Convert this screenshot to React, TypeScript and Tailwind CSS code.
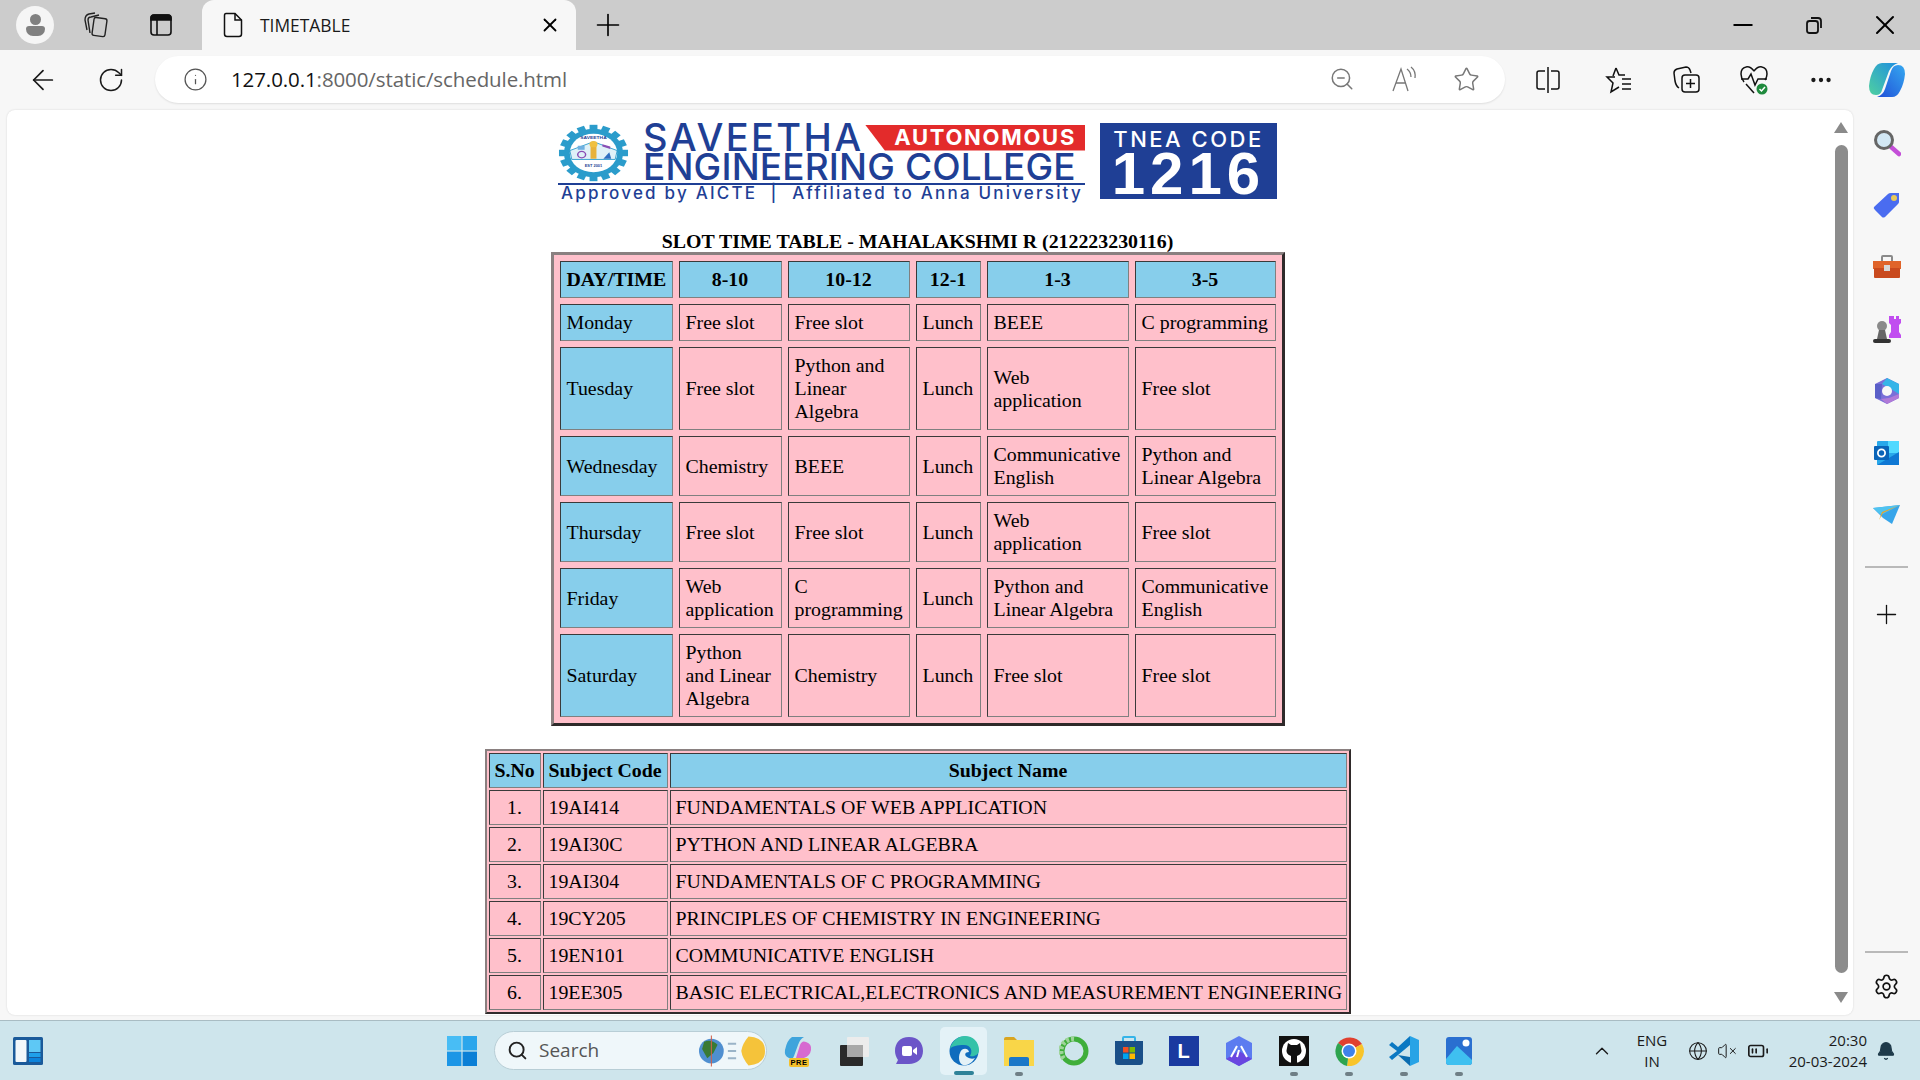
import React from 'react'
import { ArrowLeft, RotateCw, Info, ZoomOut, Star, Plus, X, Minus, MoreHorizontal, Search, ChevronUp, Settings, Bell, Globe, VolumeX, BatteryMedium } from 'lucide-react'

const timetable = [
  ['Monday', 'Free slot', 'Free slot', 'Lunch', 'BEEE', 'C programming'],
  ['Tuesday', 'Free slot', 'Python and Linear Algebra', 'Lunch', 'Web application', 'Free slot'],
  ['Wednesday', 'Chemistry', 'BEEE', 'Lunch', 'Communicative English', 'Python and Linear Algebra'],
  ['Thursday', 'Free slot', 'Free slot', 'Lunch', 'Web application', 'Free slot'],
  ['Friday', 'Web application', 'C programming', 'Lunch', 'Python and Linear Algebra', 'Communicative English'],
  ['Saturday', 'Python and Linear Algebra', 'Chemistry', 'Lunch', 'Free slot', 'Free slot'],
]

const subjects = [
  ['1.', '19AI414', 'FUNDAMENTALS OF WEB APPLICATION'],
  ['2.', '19AI30C', 'PYTHON AND LINEAR ALGEBRA'],
  ['3.', '19AI304', 'FUNDAMENTALS OF C PROGRAMMING'],
  ['4.', '19CY205', 'PRINCIPLES OF CHEMISTRY IN ENGINEERING'],
  ['5.', '19EN101', 'COMMUNICATIVE ENGLISH'],
  ['6.', '19EE305', 'BASIC ELECTRICAL,ELECTRONICS AND MEASUREMENT ENGINEERING'],
]

const cellBorder = 'border border-t-[#3a3a3a] border-l-[#3a3a3a] border-b-[#808080] border-r-[#808080]'
const tableBorder = 'border-t-[#8a8080] border-l-[#8a8080] border-b-[#2f2a2a] border-r-[#2f2a2a]'

const Emblem = () => (
  <svg viewBox="0 0 72 72" preserveAspectRatio="none" className="mt-[1px] h-[58px] w-[71px] shrink-0">
    {[0, 22.5, 45, 67.5, 90, 112.5, 135, 157.5].map((a) => (
      <rect key={a} x="32" y="1" width="8" height="70" fill="#2b9ccb" transform={`rotate(${a} 36 36)`} />
    ))}
    <circle cx="36" cy="36" r="30" fill="#2b9ccb" />
    <circle cx="36" cy="36" r="24" fill="#fff" />
    <path d="M12 33 L36 22 L60 33 L58 44 L14 44 Z" fill="#dff1f8" stroke="#2b9ccb" />
    <path d="M33 26 h6 v17 h-6 z" fill="#e8b23a" />
    <circle cx="36" cy="25" r="4" fill="#f0c040" />
    <circle cx="24" cy="38" r="4" fill="none" stroke="#8a4fb5" strokeWidth="1.5" />
    <path d="M46 43 l6 -8 l2 8 z" fill="#2f6fc0" />
    <rect x="20" y="27" width="7" height="5" fill="#6fb0e0" />
    <path d="M45 25 l8 3 v3 l-8 -3 z" fill="#8a4fb5" />
    <text x="36" y="19" textAnchor="middle" fontSize="5" fill="#1f3f95" fontWeight="700" fontFamily="Liberation Sans">SAVEETHA</text>
    <text x="36" y="53" textAnchor="middle" fontSize="4" fill="#1f3f95" fontWeight="700" fontFamily="Liberation Sans">EST 2001</text>
  </svg>
)

const Logo = () => (
  <div className="flex h-[77px] items-start gap-[15px] font-['Inter'] text-[#1f3f95]">
    <div className="flex w-[527px] flex-col">
      <div className="flex h-[60px] items-start gap-[14px]">
        <Emblem />
        <div className="flex w-[442px] flex-col">
          <div className="flex h-[29px] items-center">
            <span className="w-[222px] text-[38px] font-medium leading-[29px] tracking-[2.4px]">SAVEETHA</span>
            <div className="flex h-[26px] flex-1 items-center justify-end overflow-hidden bg-[#e32b2b] pr-[9px] text-[22px] font-bold tracking-[1.7px] text-white [clip-path:polygon(0_0,100%_0,100%_100%,9%_100%)]">AUTONOMOUS</div>
          </div>
          <div className="whitespace-nowrap text-[37px] font-medium leading-[29px] tracking-[0.15px]">ENGINEERING COLLEGE</div>
        </div>
      </div>
      <div className="h-[2px] bg-[#1f3f95]" />
      <div className="mt-[1px] whitespace-nowrap pl-[3px] text-[17px] font-medium leading-[15px] tracking-[2.2px]">Approved by AICTE&nbsp; | &nbsp;Affiliated to Anna University</div>
    </div>
    <div className="flex h-[76px] w-[177px] flex-col items-center bg-[#1f3f95] text-white">
      <span className="mt-[5px] text-[22px] font-medium leading-[22px] tracking-[2.5px]">TNEA CODE</span>
      <span className="mt-[2px] font-['Liberation_Sans'] text-[60px] font-bold leading-[44px] tracking-[5px]">1216</span>
    </div>
  </div>
)

const TimeTable = () => (
  <table className={`w-[734px] table-fixed border-separate border-spacing-[6px] border-[3px] bg-[#ffc0cb] ${tableBorder}`}>
    <colgroup>
      <col className="w-[113px]" />
      <col className="w-[103px]" />
      <col className="w-[122px]" />
      <col className="w-[65px]" />
      <col className="w-[142px]" />
      <col className="w-[141px]" />
    </colgroup>
    <thead>
      <tr>
        {['DAY/TIME', '8-10', '10-12', '12-1', '1-3', '3-5'].map((h) => (
          <th key={h} className={`bg-[#87ceeb] px-[6px] py-[6px] text-center font-bold ${cellBorder}`}>{h}</th>
        ))}
      </tr>
    </thead>
    <tbody>
      {timetable.map((row) => (
        <tr key={row[0]}>
          {row.map((c, i) => (
            <td key={i} className={`px-[6px] py-[6px] text-left ${i === 0 ? 'bg-[#87ceeb]' : ''} ${cellBorder}`}>{c}</td>
          ))}
        </tr>
      ))}
    </tbody>
  </table>
)

const SubjectTable = () => (
  <table className={`mt-[23px] w-[866px] table-fixed border-separate border-spacing-[2px] border-[2px] bg-[#ffc0cb] ${tableBorder}`}>
    <colgroup>
      <col className="w-[52px]" />
      <col className="w-[125px]" />
      <col />
    </colgroup>
    <thead>
      <tr>
        {['S.No', 'Subject Code', 'Subject Name'].map((h) => (
          <th key={h} className={`whitespace-nowrap bg-[#87ceeb] px-[5px] py-[5px] text-center font-bold ${cellBorder}`}>{h}</th>
        ))}
      </tr>
    </thead>
    <tbody>
      {subjects.map((row) => (
        <tr key={row[0]}>
          <td className={`px-[5px] py-[5px] text-center ${cellBorder}`}>{row[0]}</td>
          <td className={`px-[5px] py-[5px] ${cellBorder}`}>{row[1]}</td>
          <td className={`whitespace-nowrap px-[5px] py-[5px] ${cellBorder}`}>{row[2]}</td>
        </tr>
      ))}
    </tbody>
  </table>
)

const TitleBar = () => (
  <div className="flex h-[50px] shrink-0 items-center bg-[#cccccc] text-black">
    <div className="ml-[16px] flex h-[38px] w-[38px] flex-col items-center justify-center rounded-full bg-[#f5f5f5]">
      <div className="h-[11px] w-[11px] rounded-full bg-[#808080]" />
      <div className="mt-[1px] h-[10px] w-[19px] rounded-b-[9px] rounded-t-[4px] bg-[#808080]" />
    </div>
    <svg viewBox="0 0 28 28" className="ml-[28px] h-[28px] w-[28px]" fill="none" stroke="#222" strokeWidth="1.4">
      <rect x="11" y="7" width="13" height="18" rx="2" transform="rotate(8 17 16)" />
      <path d="M8 22 L6 9 Q6 6 9 6 L17 4" />
      <path d="M5 19 L3 9 Q3 4 7 3 L13 2" />
    </svg>
    <svg viewBox="0 0 24 24" className="ml-[39px] h-[24px] w-[24px]" fill="none" stroke="#111" strokeWidth="1.6">
      <rect x="2" y="2" width="20" height="20" rx="3" />
      <path d="M2 5 Q2 2 5 2 H19 Q22 2 22 5 V7 H2 Z" fill="#111" />
      <path d="M8 7 V22" />
    </svg>
    <div className="ml-[29px] flex h-[50px] w-[374px] items-center self-end rounded-t-[12px] bg-[#f7f7f7] pl-[21px] pr-[15px] font-['Open_Sans']">
      <svg viewBox="0 0 20 26" className="h-[26px] w-[20px]" fill="none" stroke="#111" strokeWidth="1.5">
        <path d="M3 1.5 H12 L18.5 8 V22 Q18.5 24.5 16 24.5 H4 Q1.5 24.5 1.5 22 V3.5 Q1.5 1.5 3 1.5 Z" />
        <path d="M12 1.5 V8 H18.5" />
      </svg>
      <span className="ml-[17px] flex-1 text-[17.4px] text-[#1a1a1a]">TIMETABLE</span>
      <X className="h-[22px] w-[22px]" strokeWidth={2} />
    </div>
    <Plus className="ml-[14px] h-[36px] w-[36px]" strokeWidth={1.1} />
    <div className="flex-1" />
    <Minus className="h-[30px] w-[30px]" strokeWidth={1.6} />
    <svg viewBox="0 0 20 20" className="ml-[46px] h-[20px] w-[20px]" fill="none" stroke="#111" strokeWidth="1.8">
      <rect x="3" y="6" width="11" height="12" rx="2.5" />
      <path d="M7 3 H14 Q17 3 17 6 V13" />
    </svg>
    <X className="ml-[45px] mr-[19px] h-[32px] w-[32px]" strokeWidth={1.5} />
  </div>
)

const ToolBar = () => (
  <div className="flex h-[60px] shrink-0 items-center bg-[#f7f7f7] text-[#1a1a1a]">
    <ArrowLeft className="ml-[27px] h-[32px] w-[32px]" strokeWidth={1.3} />
    <RotateCw className="ml-[38px] h-[28px] w-[28px]" strokeWidth={1.3} />
    <div className="mb-[2px] ml-[30px] flex h-[47px] w-[1350px] items-center rounded-full bg-white shadow-[0_1px_2px_rgba(0,0,0,0.1)]">
      <Info className="ml-[28px] h-[25px] w-[25px] text-[#555]" strokeWidth={1.2} />
      <span className="ml-[23px] flex-1 font-['Open_Sans'] text-[20.5px] tracking-[-0.1px]">
        <span className="text-[#111]">127.0.0.1</span><span className="text-[#666]">:8000/static/schedule.html</span>
      </span>
      <ZoomOut className="h-[26px] w-[26px] text-[#777]" strokeWidth={1.4} />
      <svg viewBox="0 0 28 26" className="ml-[36px] h-[26px] w-[28px]" fill="none" stroke="#777" strokeWidth="1.3">
        <path d="M2 25 L10 3 L17 25 M5 17 H15" />
        <path d="M16 3 Q20 6 20 11 M20 1 Q25 5 24 12" />
      </svg>
      <Star className="ml-[34px] mr-[25px] h-[27px] w-[27px] text-[#777]" strokeWidth={1.3} />
    </div>
    <svg viewBox="0 0 26 26" className="ml-[30px] h-[26px] w-[26px]" fill="none" stroke="#111" strokeWidth="1.5">
      <path d="M13 0 V26" />
      <path d="M10 4 H4 Q2 4 2 6 V20 Q2 22 4 22 H10" />
      <path d="M16 4 H22 Q24 4 24 6 V20 Q24 22 22 22 H16" />
    </svg>
    <svg viewBox="0 0 28 28" className="ml-[44px] h-[28px] w-[28px]" fill="none" stroke="#111" strokeWidth="1.5">
      <path d="M11 2 L14 9 L20 9 M10 11 L2 11 L8 17 L6 26 L14 21" />
      <path d="M11 2 L8 10" />
      <path d="M17 13 H26 M17 18 H26 M17 23 H26" />
    </svg>
    <svg viewBox="0 0 28 28" className="ml-[40px] h-[28px] w-[28px]" fill="none" stroke="#111" strokeWidth="1.5">
      <path d="M6 22 Q3 20 2 15 L1 7 Q1 4 4 3 L13 1 Q16 1 17 4 L18 7" />
      <rect x="9" y="9" width="17" height="17" rx="3" />
      <path d="M17.5 13 V22 M13 17.5 H22" />
    </svg>
    <svg viewBox="0 0 28 30" className="ml-[39px] h-[30px] w-[28px]" fill="none" stroke="#111" strokeWidth="1.5">
      <path d="M14 6 Q10 1 6 2 Q1 3 1 9 Q1 13 4 17 M14 6 Q18 1 22 2 Q27 3 27 9 Q27 12 25 15" />
      <path d="M1 14 H8 L11 9 L15 20 L18 14 H27" />
      <path d="M6 19 L14 28" />
      <circle cx="22" cy="24" r="5.5" fill="#1f8a3d" stroke="none" />
      <path d="M19.5 24 L21.5 26 L25 22" stroke="#fff" />
    </svg>
    <MoreHorizontal className="ml-[40px] h-[26px] w-[26px]" strokeWidth={2} />
    <svg viewBox="0 0 38 36" className="ml-[34px] h-[36px] w-[38px]">
      <defs>
        <linearGradient id="copA" x1="0" y1="1" x2="1" y2="0">
          <stop offset="0" stopColor="#4fd0a0" />
          <stop offset="1" stopColor="#1f8fe0" />
        </linearGradient>
        <linearGradient id="copB" x1="0" y1="1" x2="1" y2="0">
          <stop offset="0" stopColor="#2050d8" />
          <stop offset="1" stopColor="#35a8f0" />
        </linearGradient>
      </defs>
      <path d="M14 1 H30 Q24 3 21 9 L14 28 Q13 33 8 33 Q1 33 1 24 Q2 14 6 7 Q9 1 14 1 Z" fill="url(#copA)" />
      <path d="M24 35 H9 Q15 33 17 27 L23 9 Q25 3 30 3 Q37 3 37 12 Q36 22 32 29 Q29 35 24 35 Z" fill="url(#copB)" />
    </svg>
  </div>
)

const ScrollBar = () => (
  <div className="flex w-[25px] shrink-0 flex-col items-center pl-[1px]">
    <div className="mt-[12px] h-0 w-0 border-x-[7.5px] border-b-[11px] border-x-transparent border-b-[#8a8a8a]" />
    <div className="mt-[12px] h-[828px] w-[13px] rounded-full bg-[#8c8c8c]" />
    <div className="mt-[19px] h-0 w-0 border-x-[7.5px] border-t-[11px] border-x-transparent border-t-[#8a8a8a]" />
  </div>
)

const SideSlot = ({ children }: { children: React.ReactNode }) => (
  <div className="flex h-[62px] w-full items-center justify-center">{children}</div>
)

const SideBar = () => (
  <div className="flex w-[67px] shrink-0 flex-col items-center pt-[2px]">
    <SideSlot>
      <svg viewBox="0 0 28 28" className="h-[28px] w-[28px]">
        <path d="M17 17 L26 25" stroke="#c44fd8" strokeWidth="4.5" strokeLinecap="round" />
        <circle cx="11" cy="11" r="8.5" fill="#d3e8f5" stroke="#666" strokeWidth="3" />
      </svg>
    </SideSlot>
    <SideSlot>
      <svg viewBox="0 0 28 28" className="h-[28px] w-[28px]">
        <path d="M1 16 L15 3 Q16 2 18 2 H26 V11 Q26 12 25 13 L12 26 Q10 27 9 26 L2 19 Q0 17 1 16 Z" fill="#4a6cf0" />
        <circle cx="21" cy="7" r="3" fill="#e8c95a" />
      </svg>
    </SideSlot>
    <SideSlot>
      <svg viewBox="0 0 30 24" className="h-[24px] w-[30px]">
        <path d="M10 6 V2 Q10 1 11 1 H19 Q20 1 20 2 V6" fill="none" stroke="#8a8a8a" strokeWidth="2" />
        <rect x="1" y="6" width="28" height="8" fill="#e0642a" />
        <rect x="2" y="13" width="26" height="10" rx="1" fill="#c94a1e" />
        <rect x="12" y="10" width="6" height="6" fill="#d8d8d8" />
      </svg>
    </SideSlot>
    <SideSlot>
      <svg viewBox="0 0 30 30" className="h-[30px] w-[30px]">
        <path d="M19 2 H22 V5 H24 V2 H27 V5 H29 V2 V9 L27 11 V18 L29 21 V24 H17 V21 L19 18 V11 L17 9 V2 Z" fill="#c14df0" />
        <circle cx="10" cy="12" r="5" fill="#8a8a8a" />
        <path d="M7 16 H13 L15 25 H5 Z" fill="#666" />
        <rect x="1" y="25" width="18" height="4" rx="2" fill="#333" />
      </svg>
    </SideSlot>
    <SideSlot>
      <svg viewBox="0 0 26 28" className="h-[28px] w-[26px]">
        <path d="M13 1 L25 7 V21 L13 27 L1 21 V7 Z" fill="#7a6fd8" />
        <path d="M13 1 L25 7 V17 L17 12 L8 7 Z" fill="#35b4e8" />
        <path d="M25 17 V21 L13 27 L7 22 L15 21 Z" fill="#b07ad8" />
        <path d="M1 7 L8 7 L7 22 L1 21 Z" fill="#5a5fc8" />
        <circle cx="13" cy="14" r="5" fill="#f7f7f7" />
      </svg>
    </SideSlot>
    <SideSlot>
      <svg viewBox="0 0 26 26" className="h-[26px] w-[26px]">
        <rect x="3" y="1" width="22" height="24" rx="1" fill="#28a8ea" />
        <rect x="14" y="1" width="11" height="12" fill="#50d9ff" />
        <path d="M3 25 L25 12 V25 Z" fill="#0f78d4" />
        <rect x="0" y="6" width="15" height="14" rx="1" fill="#0a64b8" />
        <circle cx="7.5" cy="13" r="3.6" fill="none" stroke="#fff" strokeWidth="1.8" />
      </svg>
    </SideSlot>
    <SideSlot>
      <svg viewBox="0 0 28 20" className="h-[20px] w-[28px]">
        <path d="M0 3 L27 0 L19 19 L10 13 Z" fill="#37a5ea" />
        <path d="M0 3 L27 0 L8 10 Z" fill="#4fc3f0" />
        <path d="M27 0 L9 7 L6 15 L10 8 Z" fill="#e8a42a" />
      </svg>
    </SideSlot>
    <div className="mt-[20px] h-[2px] w-[43px] bg-[#b9b9b9]" />
    <Plus className="mt-[31px] h-[31px] w-[31px] text-[#111]" strokeWidth={1} />
    <div className="flex-1" />
    <div className="h-[2px] w-[43px] bg-[#b9b9b9]" />
    <Settings className="mb-[20px] mt-[20px] h-[27px] w-[27px] text-[#111]" strokeWidth={1.5} />
  </div>
)

const TaskSlot = ({ children, dot, active }: { children: React.ReactNode; dot?: boolean; active?: boolean }) => (
  <div className="relative flex h-[48px] w-[55px] items-center justify-center">
    {active && <div className="absolute inset-y-0 left-[4px] right-[4px] rounded-[5px] bg-[#e4f2f7]" />}
    <div className="relative">{children}</div>
    {dot && <div className="absolute bottom-[-1px] h-[4px] w-[8px] rounded-full bg-[#6f7f86]" />}
    {active && <div className="absolute bottom-[0px] h-[4px] w-[20px] rounded-full bg-[#2f8298]" />}
  </div>
)

const TaskBar = () => (
  <div className="flex h-[60px] shrink-0 items-center border-t border-t-[#a9bcc3] bg-[#cee5ec] font-['Open_Sans'] text-[#1a1a1a]">
    <svg viewBox="0 0 30 28" className="ml-[13px] h-[28px] w-[30px]">
      <rect width="30" height="28" rx="1.5" fill="#1a5a9a" />
      <rect x="2.5" y="3" width="11" height="22" rx="1" fill="#f2f7fa" />
      <rect x="16" y="3" width="11.5" height="12" fill="#5ec8f5" />
      <rect x="16" y="16" width="11.5" height="4" fill="#1fa0ea" />
      <rect x="16" y="21" width="11.5" height="4" fill="#0c84dc" />
    </svg>
    <svg viewBox="0 0 30 30" className="ml-[404px] h-[30px] w-[30px]">
      <rect width="14.4" height="14.4" fill="#48bdf5" />
      <rect x="15.6" width="14.4" height="14.4" fill="#2ba6ec" />
      <rect y="15.6" width="14.4" height="14.4" fill="#1c96e6" />
      <rect x="15.6" y="15.6" width="14.4" height="14.4" fill="#0b7fd6" />
    </svg>
    <div className="ml-[17px] flex h-[39px] w-[273px] items-center rounded-full border border-[#b8ced6] bg-[#eff7fa] pl-[12px]">
      <Search className="h-[21px] w-[21px] text-[#222]" strokeWidth={2.2} />
      <span className="ml-[11px] flex-1 text-[19px] text-[#555]">Search</span>
      <svg viewBox="0 0 64 30" className="mr-[1px] h-[32px] w-[66px]">
        <circle cx="12" cy="15" r="12" fill="#4f8fd0" />
        <path d="M5 6 Q12 3 18 9 L14 17 L8 22 L3 13 Z" fill="#3a7a35" />
        <path d="M12 0 V30" stroke="#d0604a" strokeWidth="1" />
        <path d="M28 8 H36 M28 15 H36 M28 22 H36" stroke="#9ab4c8" strokeWidth="2" />
        <path d="M64 15 Q64 28 48 29 Q42 22 41 15 Q42 8 48 1 Q64 2 64 15 Z" fill="#f5c33a" />
      </svg>
    </div>
    <div className="ml-[4px] flex items-center">
      <TaskSlot>
        <div className="relative h-[30px] w-[30px]">
          <svg viewBox="0 0 30 30" className="h-[30px] w-[30px]">
            <path d="M8 1 H20 Q16 3 14 9 L10 20 Q9 24 5 22 Q0 20 1 14 Q3 4 8 1 Z" fill="#3fa4dc" />
            <path d="M20 22 H12 L16 9 Q18 4 22 6 Q28 8 27 14 Q26 20 20 22 Z" fill="#d76ad0" />
          </svg>
          <span className="absolute bottom-[-1px] left-[5px] rounded-[2px] bg-[#f5c02a] px-[2px] font-['Liberation_Sans'] text-[7.5px] font-bold leading-[9px] tracking-[0.5px] text-black">PRE</span>
        </div>
      </TaskSlot>
      <TaskSlot>
        <svg viewBox="0 0 30 30" className="h-[30px] w-[30px]">
          <rect x="1" y="9" width="23" height="21" rx="1" fill="#2a2a2a" />
          <rect x="8" y="1" width="22" height="20" rx="1" fill="#ececec" />
          <rect x="8" y="9" width="16" height="12" fill="#a8a8a8" />
        </svg>
      </TaskSlot>
      <TaskSlot>
        <svg viewBox="0 0 30 30" className="h-[30px] w-[30px]">
          <path d="M15 1 C24 1 29 7 29 15 C29 23 23 28 15 28 H2 L4 24 C2 21 1 18 1 15 C1 7 6 1 15 1 Z" fill="#6b55c8" />
          <rect x="8" y="10" width="10" height="10" rx="2" fill="#fff" />
          <path d="M19 14 L23 11 V19 L19 16 Z" fill="#fff" />
        </svg>
      </TaskSlot>
      <TaskSlot active>
        <svg viewBox="0 0 30 30" className="h-[30px] w-[30px]">
          <circle cx="15" cy="15" r="14.5" fill="#0f6cbd" />
          <path d="M1 13 C3 4 10 0 16 0 C24 0 30 6 30 14 C30 19 25 21 21 20 C24 15 22 9 15 9 C8 9 3 10 1 13 Z" fill="#35c2a8" />
          <path d="M11 17 C12 12 19 11 20 16 C16 16 15 19 18 21 C21 23 24 23 26 22 C23 27 18 30 14 29 C10 28 9 21 11 17 Z" fill="#e4f2f7" />
        </svg>
      </TaskSlot>
      <TaskSlot dot>
        <svg viewBox="0 0 30 30" className="h-[30px] w-[30px]">
          <path d="M0 3 Q0 1 2 1 H10 L13 4 H0 Z" fill="#d9a520" />
          <rect y="4" width="30" height="26" fill="#f9d648" />
          <rect x="5" y="22" width="20" height="8" fill="#f5b82a" />
          <path d="M5 30 V23 Q5 21 7 21 H23 Q25 21 25 23 V30 Z" fill="#1b78c8" />
        </svg>
      </TaskSlot>
      <TaskSlot>
        <svg viewBox="0 0 30 30" className="h-[30px] w-[30px]">
          <circle cx="15" cy="15" r="12" fill="none" stroke="#3fae3a" strokeWidth="5" />
          <path d="M15 3 A12 12 0 0 0 6 24" fill="none" stroke="#9fd49a" strokeWidth="5" strokeDasharray="3 2" />
        </svg>
      </TaskSlot>
      <TaskSlot>
        <svg viewBox="0 0 30 30" className="h-[30px] w-[30px]">
          <path d="M9 5 V2 Q9 1 10 1 H20 Q21 1 21 2 V5" fill="none" stroke="#35b4e8" strokeWidth="2" />
          <path d="M1 5 H29 V26 Q29 29 26 29 H4 Q1 29 1 26 Z" fill="#1a4f88" />
          <rect x="9" y="11" width="5.5" height="5.5" fill="#f25022" />
          <rect x="15.5" y="11" width="5.5" height="5.5" fill="#7fba00" />
          <rect x="9" y="17.5" width="5.5" height="5.5" fill="#00a4ef" />
          <rect x="15.5" y="17.5" width="5.5" height="5.5" fill="#ffb900" />
        </svg>
      </TaskSlot>
      <TaskSlot>
        <div className="flex h-[30px] w-[30px] items-center justify-center bg-[#1a3aa0] font-['Liberation_Sans'] text-[20px] font-bold text-white">L</div>
      </TaskSlot>
      <TaskSlot>
        <svg viewBox="0 0 30 30" className="h-[30px] w-[30px]">
          <path d="M15 0 L28 7 V23 L15 30 L2 23 V7 Z" fill="#5c7cf0" />
          <path d="M15 15 L28 23 L15 30 L2 23 Z" fill="#6a46e0" />
          <path d="M7 21 L13 10 M17 10 L23 21 M13 21 L15 14" stroke="#fff" strokeWidth="2" fill="none" />
        </svg>
      </TaskSlot>
      <TaskSlot dot>
        <svg viewBox="0 0 30 30" className="h-[30px] w-[30px]">
          <rect width="30" height="30" fill="#111" />
          <circle cx="15" cy="15" r="12" fill="#fff" />
          <path d="M9 7 L12 9 H18 L21 7 L22 12 Q24 18 18 20 V27 H12 V20 Q6 18 8 12 Z" fill="#111" />
        </svg>
      </TaskSlot>
      <TaskSlot dot>
        <svg viewBox="0 0 30 30" className="h-[30px] w-[30px]">
          <path d="M15 15 L4 7 A15 15 0 0 1 28 8 Z" fill="#e0402f" />
          <path d="M15 15 L28 8 A15 15 0 0 1 13 30 Z" fill="#f8c42a" />
          <path d="M15 15 L13 30 A15 15 0 0 1 4 7 Z" fill="#2ea44f" />
          <circle cx="15" cy="15" r="7.5" fill="#fff" />
          <circle cx="15" cy="15" r="6" fill="#3f82ea" />
        </svg>
      </TaskSlot>
      <TaskSlot dot>
        <svg viewBox="0 0 30 30" className="h-[30px] w-[30px]">
          <path d="M21 0 L30 4 V26 L21 30 Z" fill="#27a3e6" />
          <path d="M21 0 V9 L9 19 L3 24 L0 21 L8 15 L0 9 L3 6 L9 11 Z" fill="#0a78c2" />
          <path d="M9 19 L21 21 V30 Z" fill="#0a6cb0" />
        </svg>
      </TaskSlot>
      <TaskSlot dot>
        <svg viewBox="0 0 26 28" className="h-[28px] w-[26px]">
          <rect width="26" height="28" rx="3" fill="#2a6fd0" />
          <path d="M0 22 L11 9 L26 23 V25 Q26 28 23 28 H3 Q0 28 0 25 Z" fill="#3fc0f0" />
          <circle cx="20" cy="6" r="3.5" fill="#fff" />
        </svg>
      </TaskSlot>
    </div>
    <div className="flex-1" />
    <ChevronUp className="h-[22px] w-[22px]" strokeWidth={1.5} />
    <div className="ml-[17px] flex w-[44px] flex-col items-center text-[15px] leading-[21px]">
      <span>ENG</span>
      <span>IN</span>
    </div>
    <Globe className="ml-[14px] h-[20px] w-[20px]" strokeWidth={1.3} />
    <VolumeX className="ml-[9px] h-[20px] w-[20px]" strokeWidth={1.2} />
    <BatteryMedium className="ml-[10px] h-[22px] w-[22px]" strokeWidth={1.8} />
    <div className="ml-[18px] flex w-[80px] flex-col items-end text-[15px] leading-[21px]">
      <span>20:30</span>
      <span className="whitespace-nowrap">20-03-2024</span>
    </div>
    <Bell className="ml-[9px] mr-[24px] h-[20px] w-[20px] fill-[#1e3a4a] text-[#1e3a4a]" strokeWidth={1.5} />
  </div>
)

export default function App() {
  return (
    <div className="flex h-screen w-full flex-col overflow-hidden bg-[#f7f7f7]">
      <TitleBar />
      <ToolBar />
      <div className="flex min-h-0 flex-1">
        <div className="mb-[5px] ml-[7px] flex w-[1846px] overflow-hidden rounded-[8px] bg-white shadow-[0_0_2px_rgba(0,0,0,0.15)]">
          <div className="flex flex-1 flex-col items-center pt-[13px] font-['Liberation_Serif'] text-[19.87px] leading-[23px] text-black">
            <Logo />
            <div className="mt-[30px] font-bold leading-[22px]">SLOT TIME TABLE - MAHALAKSHMI R (212223230116)</div>
            <TimeTable />
            <SubjectTable />
          </div>
          <ScrollBar />
        </div>
        <SideBar />
      </div>
      <TaskBar />
    </div>
  )
}
